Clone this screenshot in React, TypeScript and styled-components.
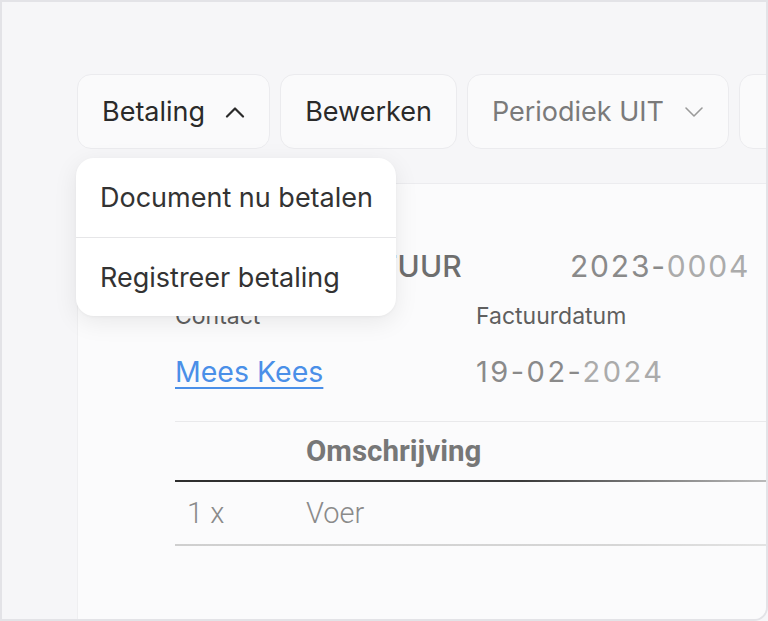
import React from 'react';
import styled, { createGlobalStyle } from 'styled-components';

const GlobalStyle = createGlobalStyle`
  html, body {
    margin: 0;
    padding: 0;
    background: #f6f6f8;
    font-family: Inter, "Noto Sans", sans-serif;
  }
  * { box-sizing: border-box; }
`;

const Frame = styled.div`
  width: 768px;
  height: 621px;
  border: 2px solid #e3e3e7;
  border-bottom-right-radius: 14px;
  background: #f6f6f8;
  overflow: hidden;
  padding: 72px 0 0 75px;
  display: flex;
  flex-direction: column;
`;

const Toolbar = styled.div`
  display: flex;
  gap: 10px;
  flex-shrink: 0;
`;

const ButtonWrap = styled.div`
  position: relative;
`;

const ToolButton = styled.button<{ $muted?: boolean }>`
  height: 75px;
  padding: 0 24px;
  display: flex;
  align-items: center;
  gap: 20px;
  background: #fafafb;
  border: 1px solid #ebebee;
  border-radius: 14px;
  font-family: Inter, sans-serif;
  font-size: 27px;
  font-weight: 400;
  color: ${({ $muted }) => ($muted ? '#7a7a7a' : '#2a2a2a')};
  white-space: nowrap;
  flex-shrink: 0;
  cursor: pointer;
`;

const Menu = styled.div`
  position: absolute;
  top: 84px;
  left: -1px;
  width: 320px;
  background: #ffffff;
  border-radius: 18px;
  box-shadow: 0 6px 24px rgba(0, 0, 0, 0.08), 0 1px 3px rgba(0, 0, 0, 0.04);
  z-index: 5;
  overflow: hidden;
`;

const MenuItem = styled.div`
  height: 79px;
  padding: 0 22px 0 24px;
  display: flex;
  align-items: center;
  font-size: 27px;
  color: #333;
  white-space: nowrap;
  & + & {
    border-top: 1px solid #e6e6e8;
  }
`;

const Card = styled.div`
  margin-top: 34px;
  margin-right: -40px;
  flex: 1;
  background: #fbfbfc;
  border-top: 1px solid #ececef;
  border-left: 1px solid #efeff1;
  padding: 65px 0 0 97px;
`;

const TitleRow = styled.div`
  display: flex;
  align-items: center;
  height: 34px;
`;

const Title = styled.div`
  width: 395px;
  font-size: 30px;
  font-weight: 500;
  letter-spacing: 0.2px;
  color: #6e6e6e;
  white-space: nowrap;
`;

const DocNumber = styled.div`
  font-size: 30px;
  letter-spacing: 1.8px;
  color: #8a8a8a;
`;

const Faded = styled.span`
  color: #ababab;
`;

const MetaGrid = styled.div`
  display: grid;
  grid-template-columns: 301px 1fr;
  row-gap: 26px;
  margin-top: 20px;
`;

const Label = styled.div`
  font-size: 23px;
  line-height: 26px;
  color: #5f5f5f;
`;

const Value = styled.div`
  font-size: 29px;
  line-height: 34px;
  color: #8a8a8a;
  letter-spacing: 2.5px;
`;

const ContactLink = styled.a`
  font-size: 28.5px;
  line-height: 34px;
  color: #4a8fe8;
  text-decoration: underline;
  text-underline-offset: 5px;
  text-decoration-thickness: 1.5px;
`;

const Table = styled.div`
  margin-top: 32px;
  border-top: 1px solid #e9e9eb;
`;

const Row = styled.div<{ $head?: boolean }>`
  display: grid;
  grid-template-columns: 131px 1fr;
  align-items: center;
  height: ${({ $head }) => ($head ? '58px' : '62px')};
`;

const Rule = styled.div<{ $thick?: boolean }>`
  height: 2px;
  background: ${({ $thick }) =>
    $thick
      ? 'linear-gradient(90deg, #2e2e2e 0%, #3a3a3a 55%, #cfcfcf 100%)'
      : 'linear-gradient(90deg, #cfcfcf 0%, #d6d6d6 70%, #e6e6e6 100%)'};
`;

const HeadCell = styled.div`
  font-family: Roboto, Inter, sans-serif;
  font-size: 29.5px;
  font-weight: 700;
  color: #777;
`;

const Cell = styled.div<{ $pad?: boolean }>`
  font-family: Roboto, Inter, sans-serif;
  font-size: 29px;
  font-weight: 300;
  color: #8a8a8a;
  padding-left: ${({ $pad }) => ($pad ? '12px' : '0')};
`;

const Chevron: React.FC<{ up?: boolean; color: string; width?: number }> = ({ up, color, width = 2 }) => (
  <svg width="20" height="12" viewBox="0 0 20 12" fill="none">
    <path
      d={up ? 'M2 10.5 L10 2.5 L18 10.5' : 'M2 2 L10 10 L18 2'}
      stroke={color}
      strokeWidth={width}
      strokeLinecap="round"
      strokeLinejoin="round"
    />
  </svg>
);

const App: React.FC = () => {
  return (
    <>
      <GlobalStyle />
      <Frame>
        <Toolbar>
          <ButtonWrap>
            <ToolButton>
              Betaling
              <Chevron up color="#2a2a2a" width={2.2} />
            </ToolButton>
            <Menu>
              <MenuItem>Document nu betalen</MenuItem>
              <MenuItem>Registreer betaling</MenuItem>
            </Menu>
          </ButtonWrap>
          <ToolButton>Bewerken</ToolButton>
          <ToolButton $muted>
            Periodiek UIT
            <Chevron color="#9a9a9a" width={1.6} />
          </ToolButton>
          <ToolButton $muted>
            <svg width="24" height="24" viewBox="0 0 24 24" fill="none">
              <path d="M14 4 L4 16 H18" stroke="#9a9a9a" strokeWidth="2" strokeLinecap="round" />
            </svg>
          </ToolButton>
        </Toolbar>

        <Card>
          <TitleRow>
            <Title>VERKOOPFACTUUR</Title>
            <DocNumber>
              2023-<Faded>0004</Faded>
            </DocNumber>
          </TitleRow>

          <MetaGrid>
            <Label>Contact</Label>
            <Label>Factuurdatum</Label>
            <div>
              <ContactLink href="#">Mees Kees</ContactLink>
            </div>
            <Value>
              19-02-<Faded>2024</Faded>
            </Value>
          </MetaGrid>

          <Table>
            <Row $head>
              <div />
              <HeadCell>Omschrijving</HeadCell>
            </Row>
            <Rule $thick />
            <Row>
              <Cell $pad>1 x</Cell>
              <Cell>Voer</Cell>
            </Row>
            <Rule />
          </Table>
        </Card>
      </Frame>
    </>
  );
};

export default App;
